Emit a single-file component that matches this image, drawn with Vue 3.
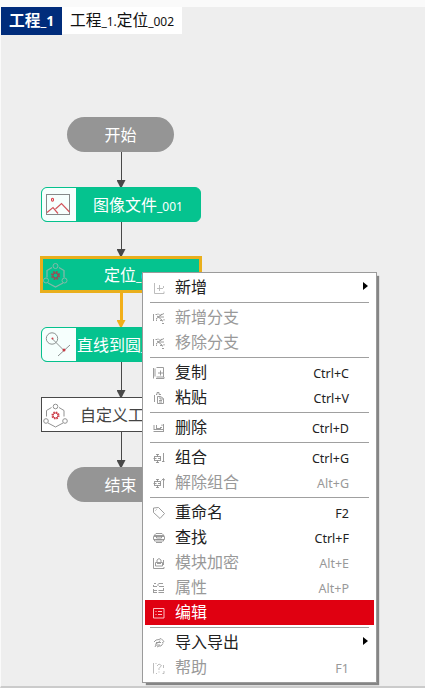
<script setup>
const icons = {
  add: 'M1.5 1v10.500h9.500v-2M10.500 4v2M6.500 3v6M4 6.500h6',
  branch: 'M.5 2v7M2.500 2.500h2M5 1.500l2 2 4-2M3 7l6-5M4 4l5 4M5 5h6M3.500 9V7.500M7 8.500h2.500v1M11 7v1.500M9 11.500h2',
  copy: 'M3.500 .5h7v9.500h-7M.5 1v10.500M2 1.500v8M3 11.500h8V10M7.500 3.500v5M5 6h5',
  paste: 'M1.500 10V3M3 2.500h1v-2h2v2h2M4.500 11.500v-7h3l3 2v5zM7 4.500v2.500h3M6 8.500h3M6 10h3',
  remove: 'M1 3v5M3.500 3v3M.5 9.500h10.500M1 7.500h9M3 6.500h5M7 5.500h2M10.500 2v7M9 4V2.500',
  group: 'M3 2.500h3M2 4.500h5M.5 6.500h3M5 6.500h3M2 8.500h5M3 10.500h3M1.500 4v5M4.500 2v3M4.500 8v3M7.500 4v5M10.500 1v9M9 9.500h2.500',
  ungroup: 'M3 2.500h3M2 4.500h5M.5 6.500h3M5 6.500h3M2 8.500h5M3 10.500h3M1.500 4v5M4.500 2v3M4.500 8v3M7.500 4v5M10.500 2v9M8.500 3.500l2-2 1.500 2',
  tag: 'M.5 5.500V1l5-.5 6 6-4.500 5zM2.500 3.500l1-1',
  find: 'M3 1.500h6l2 2H1zM.5 4.500h11v3H.5zM1.500 7v2h9V7M3.500 4v2h5V4M3 10.500h6M3 7.500h6',
  lock: 'M.5 1v10.500h10.500V10M2.500 9V5.500h7V9zM4 5V3l2-1.500L8 3v2M4 6.500h4M10.500 3v5',
  props: 'M1 1.500h2M.5 3v2M1 4.500h3M.5 7v4M1 8.500h3M1 10.500h3M5.500 1.500H10M6 4.500h5M5.500 8.500H10M5.500 10.500H11M5 2v2M10.500 6v3',
  edit: 'M.5 1.500h10.500v9.500H.5zM5 4.500h4M5 7.500h4M3 4v1M2.500 7.500h1',
  transfer: 'M1 5l2-2 3-.5 2-1 3 3-2 1.500M7 3.500L5.500 5.500H3M8 5.500H5l-3 2M10 6.500L8 9H6l-2 1M2 10l1-2h4',
  help: 'M.5 1v10.500M3 11.500h1M9.500 11.500h1.500V9M10.500 3v3M4 4l2-2 2.500 1.500L6 6.500V8M6 9.500v1M2.500 1.500h1'
}

const groups = [
  [{ label: '新增', icon: 'add', sub: true, soft: true }],
  [
    { label: '新增分支', icon: 'branch', off: true },
    { label: '移除分支', icon: 'branch', off: true }
  ],
  [
    { label: '复制', icon: 'copy', key: 'Ctrl+C' },
    { label: '粘贴', icon: 'paste', key: 'Ctrl+V' }
  ],
  [{ label: '删除', icon: 'remove', key: 'Ctrl+D' }],
  [
    { label: '组合', icon: 'group', key: 'Ctrl+G' },
    { label: '解除组合', icon: 'ungroup', key: 'Alt+G', off: true }
  ],
  [
    { label: '重命名', icon: 'tag', key: 'F2' },
    { label: '查找', icon: 'find', key: 'Ctrl+F' },
    { label: '模块加密', icon: 'lock', key: 'Alt+E', off: true },
    { label: '属性', icon: 'props', key: 'Alt+P', off: true },
    { label: '编辑', icon: 'edit', active: true }
  ],
  [
    { label: '导入导出', icon: 'transfer', sub: true },
    { label: '帮助', icon: 'help', key: 'F1', off: true, soft: true }
  ]
]
</script>

<template>
  <div class="window">
    <nav class="tabs">
      <div class="tab current">工程<small>_1</small></div>
      <div class="tab">工程<small>_1.</small>定位<small>_002</small></div>
    </nav>

    <main class="flow">
      <div class="pill">开始</div>
      <div class="link"></div>
      <div class="node">
        <div class="badge">
          <svg width="34" height="33" viewBox="0 0 34 33" fill="none">
            <rect x="4.500" y="6.500" width="23" height="20" stroke="#858989" />
            <ellipse cx="10.500" cy="11.800" rx="1" ry="1.500" stroke="#dc3a44" stroke-width="1.100" />
            <path d="M5 24.500l6-5 5 6M13.500 21l6-5.500 8 8.500" stroke="#d2555c" stroke-width="1.200" />
          </svg>
        </div>
        <div class="name">图像文件<small>_001</small></div>
      </div>
      <div class="link short"></div>
      <div class="node selected">
        <div class="badge">
          <svg width="34" height="31" viewBox="0 0 34 31" fill="none" stroke="#83b9a8">
            <path d="M9 8.500l-5 3v7M16 8.500l5 3v7M5 24l7.500 4 7.500-4" stroke-width="1.300" />
            <circle cx="12.500" cy="7" r="2.500" />
            <circle cx="3" cy="21.500" r="2.500" />
            <circle cx="21.500" cy="21.500" r="2.500" />
            <circle cx="12.500" cy="16.500" r="3.500" stroke="#98515a" stroke-width="2.200" stroke-dasharray="1.7 1.05" />
            <circle cx="12.500" cy="16.500" r="2.500" stroke="#a93e4b" />
          </svg>
        </div>
        <div class="name">定位<small>_002</small></div>
      </div>
      <div class="link gold"></div>
      <div class="node">
        <div class="badge">
          <svg width="34" height="33" viewBox="0 0 34 33" fill="none" stroke="#8c9291">
            <circle cx="10" cy="10.500" r="5.700" />
            <path d="M10 10.500l12 12M16 28l12-11" />
            <circle cx="10.500" cy="10.500" r="1" fill="#d5404a" stroke="none" />
            <circle cx="22" cy="22" r="1.500" fill="#c83b44" stroke="none" />
          </svg>
        </div>
        <div class="name left">直线到圆<small>_003</small></div>
      </div>
      <div class="link"></div>
      <div class="node plain">
        <div class="badge">
          <svg width="34" height="33" viewBox="0 0 34 33" fill="none" stroke="#929292">
            <path d="M9.500 9.500l-5 3v6M17 9.500l5 3v6M6 25l7.500 4 7.500-4" />
            <circle cx="13.500" cy="8.500" r="2.300" />
            <circle cx="4" cy="23" r="2.300" />
            <circle cx="23" cy="23" r="2.300" />
            <circle cx="13.500" cy="17.500" r="3.300" stroke="#d04550" stroke-width="1.600" stroke-dasharray="1.5 1.09" />
            <circle cx="13.500" cy="17.500" r="2.500" stroke="#c92f3b" />
          </svg>
        </div>
        <div class="name custom">自定义工具</div>
      </div>
      <div class="link"></div>
      <div class="pill">结束</div>
    </main>

    <div class="menu">
      <div v-for="(group, g) in groups" :key="g" class="group">
        <div
          v-for="item in group"
          :key="item.label"
          class="item"
          :class="{ off: item.off, active: item.active, soft: item.soft }"
        >
          <svg class="icon" width="12" height="12" viewBox="0 0 12 12">
            <path :d="icons[item.icon]" />
          </svg>
          <span class="label">{{ item.label }}</span>
          <span v-if="item.key" class="key">{{ item.key }}</span>
          <i v-if="item.sub" class="caret"></i>
        </div>
      </div>
    </div>
  </div>
</template>

<style>
body {
  margin: 0;
  overflow: hidden;
}
</style>

<style scoped>
.window {
  position: relative;
  box-sizing: border-box;
  width: 425px;
  height: 688px;
  border-top: 7px solid #fafafa;
  border-left: 1px solid #fafafa;
  border-bottom: 2px solid #cbcbcb;
  background: #eeeeee;
  overflow: hidden;
  font-family: "Noto Sans", "Noto Sans CJK SC", sans-serif;
  font-size: 16px;
  color: #222;
}
small {
  font-size: 12px;
}
.tabs {
  display: flex;
  align-items: flex-start;
  height: 28px;
}
.tab {
  box-sizing: border-box;
  width: 120px;
  height: 27px;
  padding-left: 8px;
  background: #fff;
  line-height: 26px;
  font-size: 15.7px;
  color: #111;
  white-space: nowrap;
}
.tab.current {
  width: 61px;
  height: 28px;
  background: #002c7b;
  color: #fff;
  font-weight: 700;
}
.tab.current small {
  font-size: 14px;
}
.flow {
  display: flex;
  flex-direction: column;
  align-items: center;
  width: 160px;
  margin: 82px 0 0 40px;
}
.pill {
  width: 107px;
  height: 35px;
  margin-right: 1px;
  border-radius: 17.5px;
  background: #959595;
  color: #fff;
  line-height: 37px;
  text-align: center;
}
.link {
  display: flex;
  flex-direction: column;
  align-items: center;
  width: 9px;
  height: 35px;
}
.link::before {
  content: "";
  flex: 1;
  width: 1px;
  background: #484848;
}
.link::after {
  content: "";
  width: 9px;
  height: 7px;
  background: #484848;
  clip-path: polygon(0 0, 100% 0, 60% 100%, 40% 100%);
}
.link.short {
  height: 34px;
}
.link.gold {
  height: 34px;
}
.link.gold::before {
  width: 3px;
  background: #f2af19;
}
.link.gold::after {
  background: #f2af19;
}
.node {
  display: flex;
  box-sizing: border-box;
  width: 160px;
  height: 35px;
  border: 1px solid #05c18d;
  border-radius: 6px;
  background: #05c38f;
  color: #fff;
  overflow: hidden;
}
.badge {
  flex: none;
  width: 34px;
  background: #f6fffd;
}
.badge svg {
  display: block;
}
.name {
  flex: 1;
  line-height: 34px;
  text-align: center;
  white-space: nowrap;
}
.name.left {
  padding-left: 1px;
  text-align: left;
}
.name.custom {
  padding-left: 4px;
  text-align: left;
  color: #444;
}
.node.selected {
  flex: none;
  width: 162px;
  height: 37px;
  border: 3px solid #e9af1c;
  border-radius: 0;
}
.node.selected .name {
  padding-right: 10px;
  line-height: 32px;
}
.selected .badge {
  background: none;
}
.node.plain {
  border-color: #484848;
  border-radius: 0;
  background: #fff;
}
.plain .badge {
  background: #fff;
}
.menu {
  position: absolute;
  left: 141px;
  top: 265px;
  box-sizing: border-box;
  width: 235px;
  height: 411px;
  padding: 2px;
  border: 1px solid #9b9b9b;
  background: #fff;
  box-shadow: 3px 3px 1px -1px #858585;
}
.group + .group::before {
  content: "";
  display: block;
  height: 1px;
  margin: 2px 5px;
  background: #a0a0a0;
}
.item {
  display: flex;
  align-items: center;
  box-sizing: border-box;
  height: 25px;
  padding: 0 25px 0 8px;
}
.icon {
  flex: none;
  fill: none;
  stroke: #919191;
  stroke-width: 0.9;
}
.soft .icon {
  stroke: #b5b5b5;
}
.label {
  margin-left: 10px;
  line-height: 25px;
}
.key {
  margin-left: auto;
  font-size: 12.5px;
  line-height: 25px;
  padding-top: 1px;
}
.off {
  color: #999;
}
.active {
  background: #e00011;
  color: #fff;
}
.active .icon {
  stroke: #ffd5d8;
}
.caret {
  width: 5px;
  height: 8px;
  margin: -3px -19px 0 auto;
  background: #000;
  clip-path: polygon(0 0, 100% 50%, 0 100%);
}
</style>
